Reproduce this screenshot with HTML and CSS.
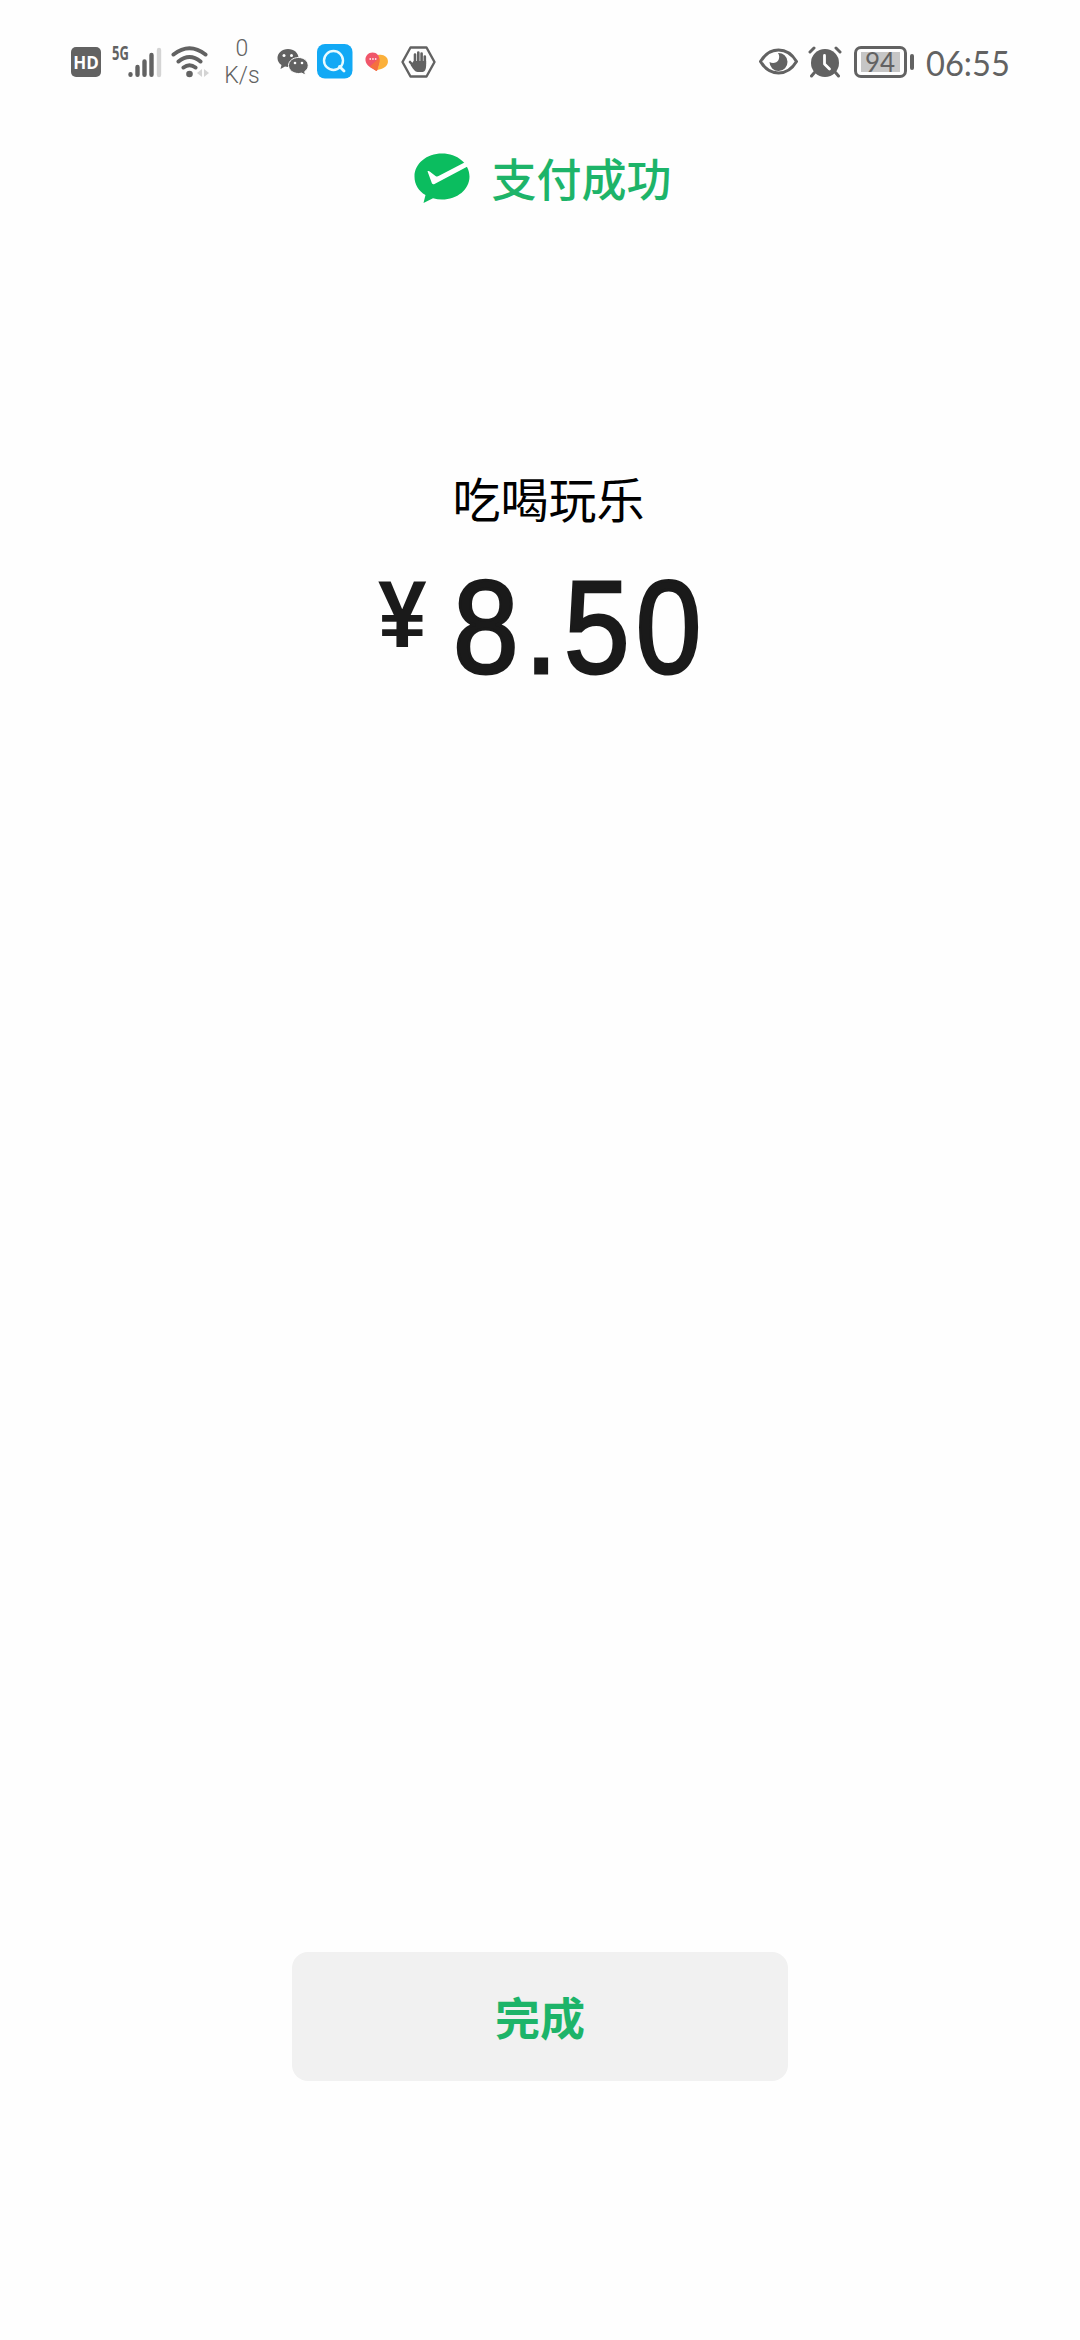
FILE: index.html
```html
<!DOCTYPE html>
<html lang="zh-CN">
<head>
    <meta charset="UTF-8">
    <meta name="viewport" content="width=device-width, initial-scale=1.0">
    <title>支付成功</title>
    <link rel="stylesheet" href="styles.css">
</head>
<body>
    <div class="status-bar">
        <div class="status-left">
            <span class="hd">HD</span>
            <span class="network">5G</span>
            <svg class="signal" width="34" height="32" viewBox="0 0 34 32">
                <g stroke="#626262" stroke-width="4.400" stroke-linecap="round">
                    <path d="M2.500 28.300v.5M9.500 21v7.800M16.500 15.500v13.300M23.500 9v19.800"/>
                    <path d="M31 4v25" stroke="#d4d4d4"/>
                </g>
            </svg>
            <svg class="wifi" width="38" height="32" viewBox="0 0 38 32">
                <g fill="none" stroke="#626262" stroke-width="4" stroke-linecap="round">
                    <path d="M2.500 8.500Q18.500-4 34.500 8.500M7.500 15.500Q18.500 6.500 29.500 15.500M12.500 21.500Q18.500 17 24.500 21.500"/>
                </g>
                <circle cx="18.500" cy="28" r="3.300" fill="#626262"/>
                <path d="M31 23v8l-5-4zM33 23v8l5-4z" fill="#d4d4d4"/>
            </svg>
            <div class="speed">
                <span>0</span>
                <span>K/s</span>
            </div>
            <svg class="wechat" width="32" height="28" viewBox="0 0 32 28">
                <path d="M11 1C5 1 .5 5 .5 10c0 3 1.500 5.500 4 7l-1 4 4.500-2.500c1 .3 2 .4 3 .4 6 0 10.500-4 10.500-9S17 1 11 1z" fill="#626262"/>
                <path d="M21.500 9.500c-5.500 0-10 3.600-10 8s4.500 8 10 8c1 0 2-.1 3-.4l4 2-.8-3.500c2.300-1.500 3.500-3.600 3.500-6.100 0-4.400-4.200-8-9.700-8z" fill="#626262" stroke="#fff"/>
                <g fill="#fff">
                    <circle cx="7" cy="7.500" r="1.500"/><circle cx="14.500" cy="7.500" r="1.500"/>
                    <circle cx="18" cy="15" r="1.300"/><circle cx="25" cy="15" r="1.300"/>
                </g>
            </svg>
            <svg class="search" width="36" height="35" viewBox="0 0 36 35">
                <rect width="35.500" height="34.500" rx="8" fill="#12a9f5"/>
                <circle cx="16.500" cy="16.500" r="9.500" fill="none" stroke="#e8fbff" stroke-width="2.400"/>
                <path d="M22.500 22.500l4.500 4.500" stroke="#e8fbff" stroke-width="2.800" stroke-linecap="round"/>
            </svg>
            <svg class="heart" width="24" height="20" viewBox="0 0 24 20">
                <path d="M10 18.500L9 7c1-4 4.500-4.500 8-4 4 .5 6.800 4 5.800 8-1.500 5-7 6.500-12.800 7.500z" fill="#fbb03b"/>
                <path d="M12 19C6 16 1 13.500.5 8.500 0 4 3.500.5 7.500.5c4.500 0 7 3.500 7 7.500 0 4.500-2 7-2.500 11z" fill="#f0566a"/>
                <path d="M12 19c-3-1.500-5-3-7-4.500L14 6c1.500 4.500-1.500 8-2 13z" fill="#f5703f"/>
                <path d="M4.500 7h7" stroke="#fff" stroke-width="1.600" stroke-dasharray="1.500 1.200"/>
            </svg>
            <svg class="hand" width="35" height="32" viewBox="0 0 35 32">
                <path d="M9.500 1.500h16L33.500 16l-8 14.500h-16L1.500 16z" fill="none" stroke="#626262" stroke-width="2.400" stroke-linejoin="round"/>
                <g stroke="#626262" stroke-width="2.600" stroke-linecap="round" fill="none">
                    <path d="M14 18V8.500M17.300 17V6.500M20.600 17V7.500M23.800 18v-7.500M9 16l4.500 5"/>
                </g>
                <path d="M12.700 15h12.400v5c0 3-1.500 6-3.500 6h-5c-2.500 0-5-3.500-7-7z" fill="#626262"/>
            </svg>
        </div>
        <div class="status-right">
            <svg class="eye" width="39" height="27" viewBox="0 0 39 27">
                <path d="M1.500 13.500C6 6 12 2 19.500 2S33 6 37.500 13.500C33 21 27 25 19.500 25S6 21 1.500 13.500z" fill="none" stroke="#626262" stroke-width="3" stroke-linejoin="round"/>
                <path d="M19 5a9 9 0 1 1-8.500 9c3 2 7.500 1 9-2 1.200-2.600.8-5-.5-7z" fill="#626262"/>
            </svg>
            <svg class="alarm" width="34" height="32" viewBox="0 0 34 32">
                <circle cx="17" cy="17" r="14" fill="#626262"/>
                <g stroke="#626262" stroke-width="3" stroke-linecap="round">
                    <path d="M2 6l4-4M32 6l-4-4M6.500 26.500L3.500 30M27.500 26.500l3 3.500"/>
                </g>
                <path d="M16.500 9.500v8.500l5 5" fill="none" stroke="#fff" stroke-width="2.800" stroke-linecap="round" stroke-linejoin="round"/>
            </svg>
            <div class="battery"><span>94</span></div>
            <div class="battery-tip"></div>
            <span class="clock">06:55</span>
        </div>
    </div>

    <div class="result">
        <svg width="56" height="51" viewBox="0 0 56 51">
            <path d="M28 .5C12.700.5.5 10.500.5 23.500c0 8 4 14.500 11 18.500L9.500 50l9.500-4.800c3 .8 6 1.300 9 1.300 15.300 0 27.500-10 27.500-23S43.300.5 28 .5z" fill="#0bbd5f"/>
            <path d="M13.500 18.300c1-.6 1.700-.2 2.500.4l5.500 4.200c1 .6 2 .7 3 .2L50.500 9.500l3.500 3.700L20.500 31c-1.200.7-2 .3-2.600-.7z" fill="#fff"/>
        </svg>
        <span>支付成功</span>
    </div>

    <div class="payee">吃喝玩乐</div>
    <div class="amount">
        <span class="currency">¥</span>
        <span class="value">8.50</span>
    </div>

    <button class="done">完成</button>
</body>
</html>
```
FILE: styles.css
```css
body {
    margin: 0;
    height: 2340px;
    background-color: #fefefe;
    font-family: "Liberation Sans", "Noto Sans CJK SC", sans-serif;
    display: flex;
    flex-direction: column;
    align-items: center;
}
.status-bar {
    width: 938px;
    height: 60px;
    padding: 32px 71px 0;
    display: flex;
    justify-content: space-between;
    color: #626262;
}
.status-left,
.status-right {
    display: flex;
    align-items: center;
    height: 59px;
}
.hd {
    width: 30px;
    height: 30px;
    line-height: 31px;
    border-radius: 5px;
    background-color: #626262;
    color: white;
    font-family: "Open Sans", sans-serif;
    font-size: 17px;
    font-weight: 700;
    text-align: center;
}
.network {
    margin: -18px 0 0 11px;
    width: 16px;
    font-family: "Open Sans", sans-serif;
    font-size: 19px;
    font-weight: 700;
    transform: scaleX(0.68);
    transform-origin: left;
}
.wifi {
    margin-left: 9px;
}
.speed {
    margin-left: 15px;
    width: 36px;
    display: flex;
    flex-direction: column;
    align-items: center;
    font-family: Roboto, sans-serif;
    font-size: 23px;
    font-weight: 300;
    line-height: 27px;
}
.wechat {
    margin-left: 17px;
}
.search {
    margin-left: 8px;
}
.heart {
    margin-left: 12px;
}
.hand {
    margin-left: 12px;
}
.alarm {
    margin-left: 10px;
}
.battery {
    margin-left: 12px;
    width: 53px;
    height: 32px;
    box-sizing: border-box;
    border: 3px solid #626262;
    border-radius: 7px;
    padding: 3px;
}
.battery span {
    display: block;
    width: 39px;
    height: 20px;
    margin: 0 1px;
    background-color: #c6c6c6;
    font-family: Lato, sans-serif;
    font-size: 26px;
    line-height: 20px;
    text-align: center;
}
.battery-tip {
    margin-left: 3px;
    width: 4px;
    height: 16px;
    border-radius: 2px;
    background-color: #626262;
}
.clock {
    margin-left: 12px;
    margin-right: -4px;
    padding-top: 2px;
    font-family: Lato, sans-serif;
    font-size: 34px;
    line-height: 40px;
    transform: scaleX(0.96);
    transform-origin: left;
}
.result {
    margin-top: 58px;
    margin-left: 6px;
    height: 56px;
    display: flex;
    align-items: center;
    gap: 21px;
    color: #1db469;
    font-family: "Noto Sans CJK SC", sans-serif;
    font-size: 45px;
    font-weight: 500;
    line-height: 56px;
}
.payee {
    margin-top: 261px;
    margin-left: 17px;
    color: black;
    font-family: "Noto Sans CJK SC", sans-serif;
    font-size: 48px;
    line-height: 60px;
}
.amount {
    width: 324px;
    height: 130px;
    margin-top: 37px;
    display: flex;
    color: #1a1a1a;
}
.currency {
    width: 75px;
    flex: none;
    font-size: 94px;
    font-weight: 700;
    line-height: 102px;
    transform: scaleX(0.93);
    transform-origin: left;
}
.value {
    font-size: 131px;
    line-height: 127px;
    letter-spacing: 7px;
    transform: scaleX(0.9);
    transform-origin: left;
    -webkit-text-stroke: 3px #1a1a1a;
}
.done {
    margin-top: 1258px;
    width: 496px;
    height: 129px;
    border: none;
    border-radius: 16px;
    background-color: #f1f1f1;
    color: #1db469;
    font-family: "Noto Sans CJK SC", sans-serif;
    font-size: 45px;
    font-weight: 700;
}
```
